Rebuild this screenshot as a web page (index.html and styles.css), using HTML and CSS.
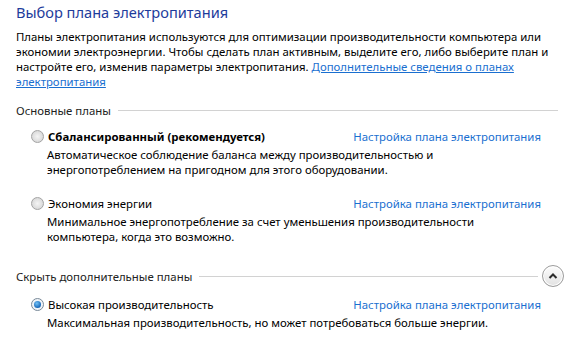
FILE: index.html
```html
<!DOCTYPE html>
<html lang="ru">
<head>
    <meta charset="UTF-8">
    <title>Выбор плана электропитания</title>
    <link rel="stylesheet" href="styles.css">
</head>
<body>
    <div class="page">
        <h1 class="title">Выбор плана электропитания</h1>

        <p class="intro">
            Планы электропитания используются для оптимизации производительности компьютера или<br>
            экономии электроэнергии. Чтобы сделать план активным, выделите его, либо выберите план и<br>
            настройте его, изменив параметры электропитания. <a href="#" class="more-link">Дополнительные сведения о планах<br>электропитания</a>
        </p>

        <div class="section">
            <span class="section-label">Основные планы</span>
            <span class="section-line"></span>
        </div>

        <div class="plan">
            <div class="plan-row">
                <span class="radio"></span>
                <span class="plan-name bold">Сбалансированный (рекомендуется)</span>
                <a href="#" class="plan-link">Настройка плана электропитания</a>
            </div>
            <div class="plan-desc">
                Автоматическое соблюдение баланса между производительностью и<br>
                энергопотреблением на пригодном для этого оборудовании.
            </div>
        </div>

        <div class="plan">
            <div class="plan-row">
                <span class="radio"></span>
                <span class="plan-name">Экономия энергии</span>
                <a href="#" class="plan-link">Настройка плана электропитания</a>
            </div>
            <div class="plan-desc">
                Минимальное энергопотребление за счет уменьшения производительности<br>
                компьютера, когда это возможно.
            </div>
        </div>

        <div class="section section-extra">
            <span class="section-label">Скрыть дополнительные планы</span>
            <span class="section-line"></span>
            <button class="collapse-button">
                <svg viewBox="0 0 10 8" width="10" height="8">
                    <path d="M1.5 6L5 2.5L8.5 6" stroke="#2b2b2b" stroke-width="2" fill="none"/>
                </svg>
            </button>
        </div>

        <div class="plan">
            <div class="plan-row">
                <span class="radio checked"></span>
                <span class="plan-name">Высокая производительность</span>
                <a href="#" class="plan-link">Настройка плана электропитания</a>
            </div>
            <div class="plan-desc">
                Максимальная производительность, но может потребоваться больше энергии.
            </div>
        </div>
    </div>
</body>
</html>
```

FILE: styles.css
```css
body {
    margin: 0;
    background-color: #fff;
    font-family: 'Noto Sans', 'Open Sans', sans-serif;
    font-size: 11.4px;
    color: #000;
}
.page {
    padding: 1px 0 0 16px;
    width: 542px;
}
.title {
    margin: 0;
    font-size: 14.6px;
    font-weight: normal;
    line-height: 22px;
    color: #1e3c9c;
}
.intro {
    margin: 6px 0 0 0;
    line-height: 15px;
    white-space: nowrap;
}
a {
    color: #1a6fd0;
    text-decoration: none;
}
.more-link {
    text-decoration: underline;
}
.section {
    display: flex;
    align-items: center;
    height: 16px;
    margin-top: 13px;
    color: #222;
}
.section-line {
    flex: 1;
    height: 1px;
    margin-left: 7px;
    background-color: #d2d2d2;
}
.section-extra {
    height: 22px;
    margin-top: 21px;
    margin-right: -6px;
}
.section-extra .section-line {
    margin-right: 4px;
}
.collapse-button {
    width: 22px;
    height: 22px;
    padding: 0;
    border: 1px solid #9c9c9c;
    border-radius: 50%;
    background: linear-gradient(#fdfdfd, #e2e2e2);
    box-shadow: inset 0 0 0 1px #fff;
    display: flex;
    align-items: center;
    justify-content: center;
}
.plan {
    padding: 0 0 0 15px;
    width: 510px;
}
.plan + .plan {
    margin-top: 17px;
}
.section + .plan {
    margin-top: 9px;
}
.section-extra + .plan {
    margin-top: 8px;
}
.plan-row {
    display: flex;
    align-items: center;
    height: 18px;
}
.radio {
    width: 11px;
    height: 11px;
    border: 1px solid #a3a3a3;
    border-radius: 50%;
    background: radial-gradient(circle at 50% 50%, #f4f4f4 0, #e0e0e0 55%, #cfcfcf 100%);
    margin-right: 4px;
    box-sizing: content-box;
    flex: none;
    position: relative;
}
.radio.checked {
    border-color: #7a8a99;
    background: #eef3f8;
}
.radio.checked::after {
    content: '';
    position: absolute;
    left: 2px;
    top: 2px;
    width: 7px;
    height: 7px;
    border-radius: 50%;
    background: radial-gradient(circle at 40% 35%, #6fc0f5 0, #1767b8 70%, #0c4a8a 100%);
}
.plan-name {
    flex: 1;
}
.bold {
    font-weight: bold;
}
.plan-desc {
    padding-left: 16px;
    line-height: 15px;
    margin-top: 2px;
}
```
